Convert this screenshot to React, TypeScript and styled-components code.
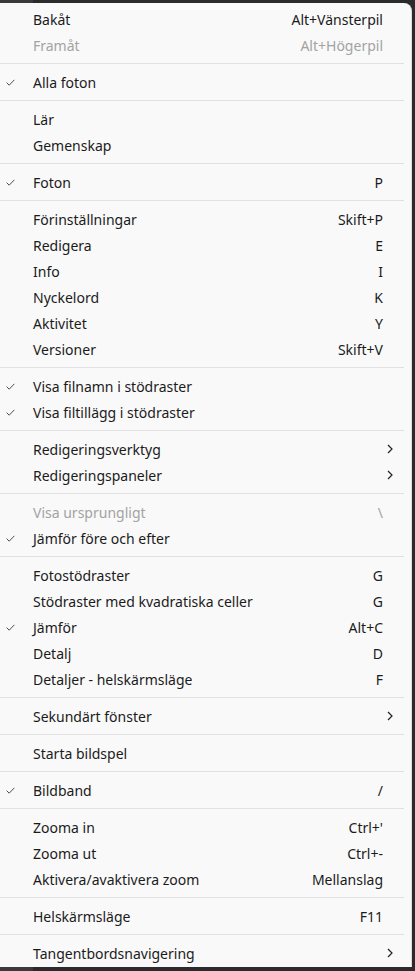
import { Fragment } from "react";
import styled, { createGlobalStyle } from "styled-components";

const GlobalStyle = createGlobalStyle`
  html, body {
    margin: 0;
    padding: 0;
    background: #2b2b2b;
  }
  body {
    font-family: "Segoe UI", "Noto Sans", "Liberation Sans", sans-serif;
  }
`;

const Backdrop = styled.div`
  width: 415px;
  height: 971px;
  padding-top: 3px;
  box-sizing: border-box;
  overflow: hidden;
  background: linear-gradient(to right, #3a3a3a 0 33px, #2b2b2b 33px);
`;

const Menu = styled.div`
  width: 412px;
  height: 964px;
  box-sizing: border-box;
  background: #f9f9f9;
  border-top-right-radius: 8px;
  border-right: 1px solid #dcdcdc;
  padding: 3px 0 0 0;
  display: flex;
  flex-direction: column;
`;

const Row = styled.div<{ $disabled?: boolean }>`
  height: 26px;
  flex: 0 0 26px;
  display: grid;
  grid-template-columns: 33px 1fr auto 28px;
  align-items: center;
  font-size: 14px;
  color: ${(p) => (p.$disabled ? "#a3a3a3" : "#1b1b1b")};
`;

const CheckCell = styled.span`
  display: flex;
  align-items: center;
  padding-left: 6px;
`;

const Label = styled.span`
  white-space: nowrap;
`;

const Shortcut = styled.span`
  white-space: nowrap;
  text-align: right;
`;

const ArrowCell = styled.span`
  display: flex;
  align-items: center;
  justify-content: flex-end;
  padding-right: 18px;
`;

const Separator = styled.div`
  flex: 0 0 11px;
  display: flex;
  align-items: center;
  padding-right: 7px;
  &::after {
    content: "";
    flex: 1;
    height: 1px;
    background: #e1e1e1;
  }
`;

type Item = {
  label: string;
  key?: string;
  checked?: boolean;
  disabled?: boolean;
  sub?: boolean;
};

const groups: Item[][] = [
  [
    { label: "Bakåt", key: "Alt+Vänsterpil" },
    { label: "Framåt", key: "Alt+Högerpil", disabled: true },
  ],
  [{ label: "Alla foton", checked: true }],
  [{ label: "Lär" }, { label: "Gemenskap" }],
  [{ label: "Foton", key: "P", checked: true }],
  [
    { label: "Förinställningar", key: "Skift+P" },
    { label: "Redigera", key: "E" },
    { label: "Info", key: "I" },
    { label: "Nyckelord", key: "K" },
    { label: "Aktivitet", key: "Y" },
    { label: "Versioner", key: "Skift+V" },
  ],
  [
    { label: "Visa filnamn i stödraster", checked: true },
    { label: "Visa filtillägg i stödraster", checked: true },
  ],
  [
    { label: "Redigeringsverktyg", sub: true },
    { label: "Redigeringspaneler", sub: true },
  ],
  [
    { label: "Visa ursprungligt", key: "\\", disabled: true },
    { label: "Jämför före och efter", checked: true },
  ],
  [
    { label: "Fotostödraster", key: "G" },
    { label: "Stödraster med kvadratiska celler", key: "G" },
    { label: "Jämför", key: "Alt+C", checked: true },
    { label: "Detalj", key: "D" },
    { label: "Detaljer - helskärmsläge", key: "F" },
  ],
  [{ label: "Sekundärt fönster", sub: true }],
  [{ label: "Starta bildspel" }],
  [{ label: "Bildband", key: "/", checked: true }],
  [
    { label: "Zooma in", key: "Ctrl+'" },
    { label: "Zooma ut", key: "Ctrl+-" },
    { label: "Aktivera/avaktivera zoom", key: "Mellanslag" },
  ],
  [{ label: "Helskärmsläge", key: "F11" }],
  [{ label: "Tangentbordsnavigering", sub: true }],
];

function Check() {
  return (
    <svg width="9" height="7" viewBox="0 0 9 7" fill="none">
      <path d="M0.6 3.6 L3.2 6.2 L8.4 0.8" stroke="#3a3a3a" strokeWidth="0.9" />
    </svg>
  );
}

function Chevron() {
  return (
    <svg width="6" height="10" viewBox="0 0 6 10" fill="none">
      <path d="M1 1 L5 5 L1 9" stroke="#222" strokeWidth="1.2" />
    </svg>
  );
}

function MenuRow({ item }: { item: Item }) {
  return (
    <Row $disabled={item.disabled}>
      <CheckCell>{item.checked && <Check />}</CheckCell>
      <Label>{item.label}</Label>
      <Shortcut>{item.key}</Shortcut>
      <ArrowCell>{item.sub && <Chevron />}</ArrowCell>
    </Row>
  );
}

export default function App() {
  return (
    <>
      <GlobalStyle />
      <Backdrop>
        <Menu>
          {groups.map((g, gi) => (
            <Fragment key={gi}>
              {gi > 0 && <Separator />}
              {g.map((it) => (
                <MenuRow key={it.label} item={it} />
              ))}
            </Fragment>
          ))}
        </Menu>
      </Backdrop>
    </>
  );
}
